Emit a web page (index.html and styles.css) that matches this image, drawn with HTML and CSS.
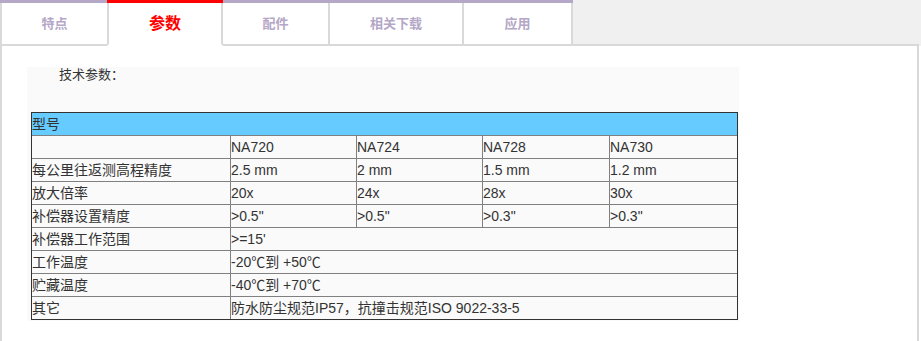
FILE: index.html
```html
<!DOCTYPE html>
<html lang="zh-CN">
<head>
<meta charset="utf-8">
<title>技术参数</title>
<link rel="stylesheet" href="styles.css">
</head>
<body>
<nav class="tabs">
  <a class="tab tab-1"><span>特点</span></a>
  <a class="tab tab-2 active"><span>参数</span></a>
  <a class="tab tab-3"><span>配件</span></a>
  <a class="tab tab-4"><span>相关下载</span></a>
  <a class="tab tab-5"><span>应用</span></a>
  <span class="tabs-rest"></span>
</nav>
<section class="panel">
  <div class="spec">
    <p class="spec-title">技术参数：</p>
    <div class="spec-frame">
      <table class="spec-table">
        <tr class="head"><td colspan="5">型号</td></tr>
        <tr class="models">
          <td class="c1"></td>
          <td class="c2">NA720</td>
          <td class="c3">NA724</td>
          <td class="c4">NA728</td>
          <td class="c5">NA730</td>
        </tr>
        <tr><td>每公里往返测高程精度</td><td>2.5 mm</td><td>2 mm</td><td>1.5 mm</td><td>1.2 mm</td></tr>
        <tr><td>放大倍率</td><td>20x</td><td>24x</td><td>28x</td><td>30x</td></tr>
        <tr><td>补偿器设置精度</td><td>&gt;0.5"</td><td>&gt;0.5"</td><td>&gt;0.3"</td><td>&gt;0.3"</td></tr>
        <tr><td>补偿器工作范围</td><td colspan="4">&gt;=15'</td></tr>
        <tr><td>工作温度</td><td colspan="4">-20℃到 +50℃</td></tr>
        <tr><td>贮藏温度</td><td colspan="4">-40℃到 +70℃</td></tr>
        <tr><td>其它</td><td colspan="4">防水防尘规范IP57，抗撞击规范ISO 9022-33-5</td></tr>
      </table>
    </div>
  </div>
</section>
</body>
</html>
```

FILE: styles.css
```css
html, body {
  margin: 0;
  padding: 0;
  background: #fff;
}

body {
  width: 921px;
  height: 341px;
  overflow: hidden;
  font-family: "Liberation Sans", "Noto Sans CJK SC", sans-serif;
  color: #333;
}

/* ---- tab strip ---- */
.tabs {
  display: flex;
  height: 46px;
  background: #f0f0f0;
}

.tab {
  display: flex;
  flex-direction: column;
  box-sizing: border-box;
  height: 46px;
  margin-left: -2px;
  border-top: 3px solid #b4a7c7;
  position: relative;
  cursor: pointer;
}

.tab:first-child {
  margin-left: 0;
}

.tab span {
  flex: 1;
  background: #fff;
  border: 2px solid #d9d9d9;
  border-top: 0;
  color: #b4a7c7;
  font: bold 13px/39px "Noto Sans CJK SC", sans-serif;
  text-align: center;
}

.tab-1 { width: 109px; }
.tab-2 { width: 116px; }
.tab-3 { width: 109px; }
.tab-4 { width: 136px; }
.tab-5 { width: 111px; }

.tab.active {
  border-top-color: #ff0000;
  z-index: 1;
}

.tab.active span {
  border-bottom-color: #fff;
  color: #ff0000;
  font-size: 16px;
  line-height: 38px;
}

.tabs-rest {
  flex: 1;
  margin-right: 2px;
  border-bottom: 2px solid #d9d9d9;
}

/* ---- content panel ---- */
.panel {
  box-sizing: border-box;
  width: 919px;
  height: 295px;
  border-left: 2px solid #d9d9d9;
  border-right: 2px solid #d9d9d9;
  padding: 21px 0 0 25px;
}

.spec {
  box-sizing: border-box;
  width: 712px;
  background: #fafafa;
  padding: 0 1px 1px 4px;
}

.spec-title {
  margin: 0 0 31px;
  padding-left: 28px;
  font-size: 13px;
  line-height: 15px;
  margin-bottom: 30px;
}

.spec-frame {
  border: 1px solid #333;
}

.spec-table {
  width: 705px;
  border-collapse: separate;
  border-spacing: 0;
  font-size: 14px;
  line-height: 22px;
  color: #333;
}

.spec-table td {
  padding: 0;
  white-space: nowrap;
  vertical-align: middle;
  border-top: 1px solid #808080;
  border-left: 1px solid #808080;
}

.spec-table tr:first-child td {
  border-top: 0;
}

.spec-table td:first-child {
  border-left: 0;
}

.spec-table .head td {
  background: #66ccff;
}

.models .c1 { width: 198px; }
.models .c2 { width: 125px; }
.models .c3 { width: 125px; }
.models .c4 { width: 126px; }
.models .c5 { width: 127px; }
```
